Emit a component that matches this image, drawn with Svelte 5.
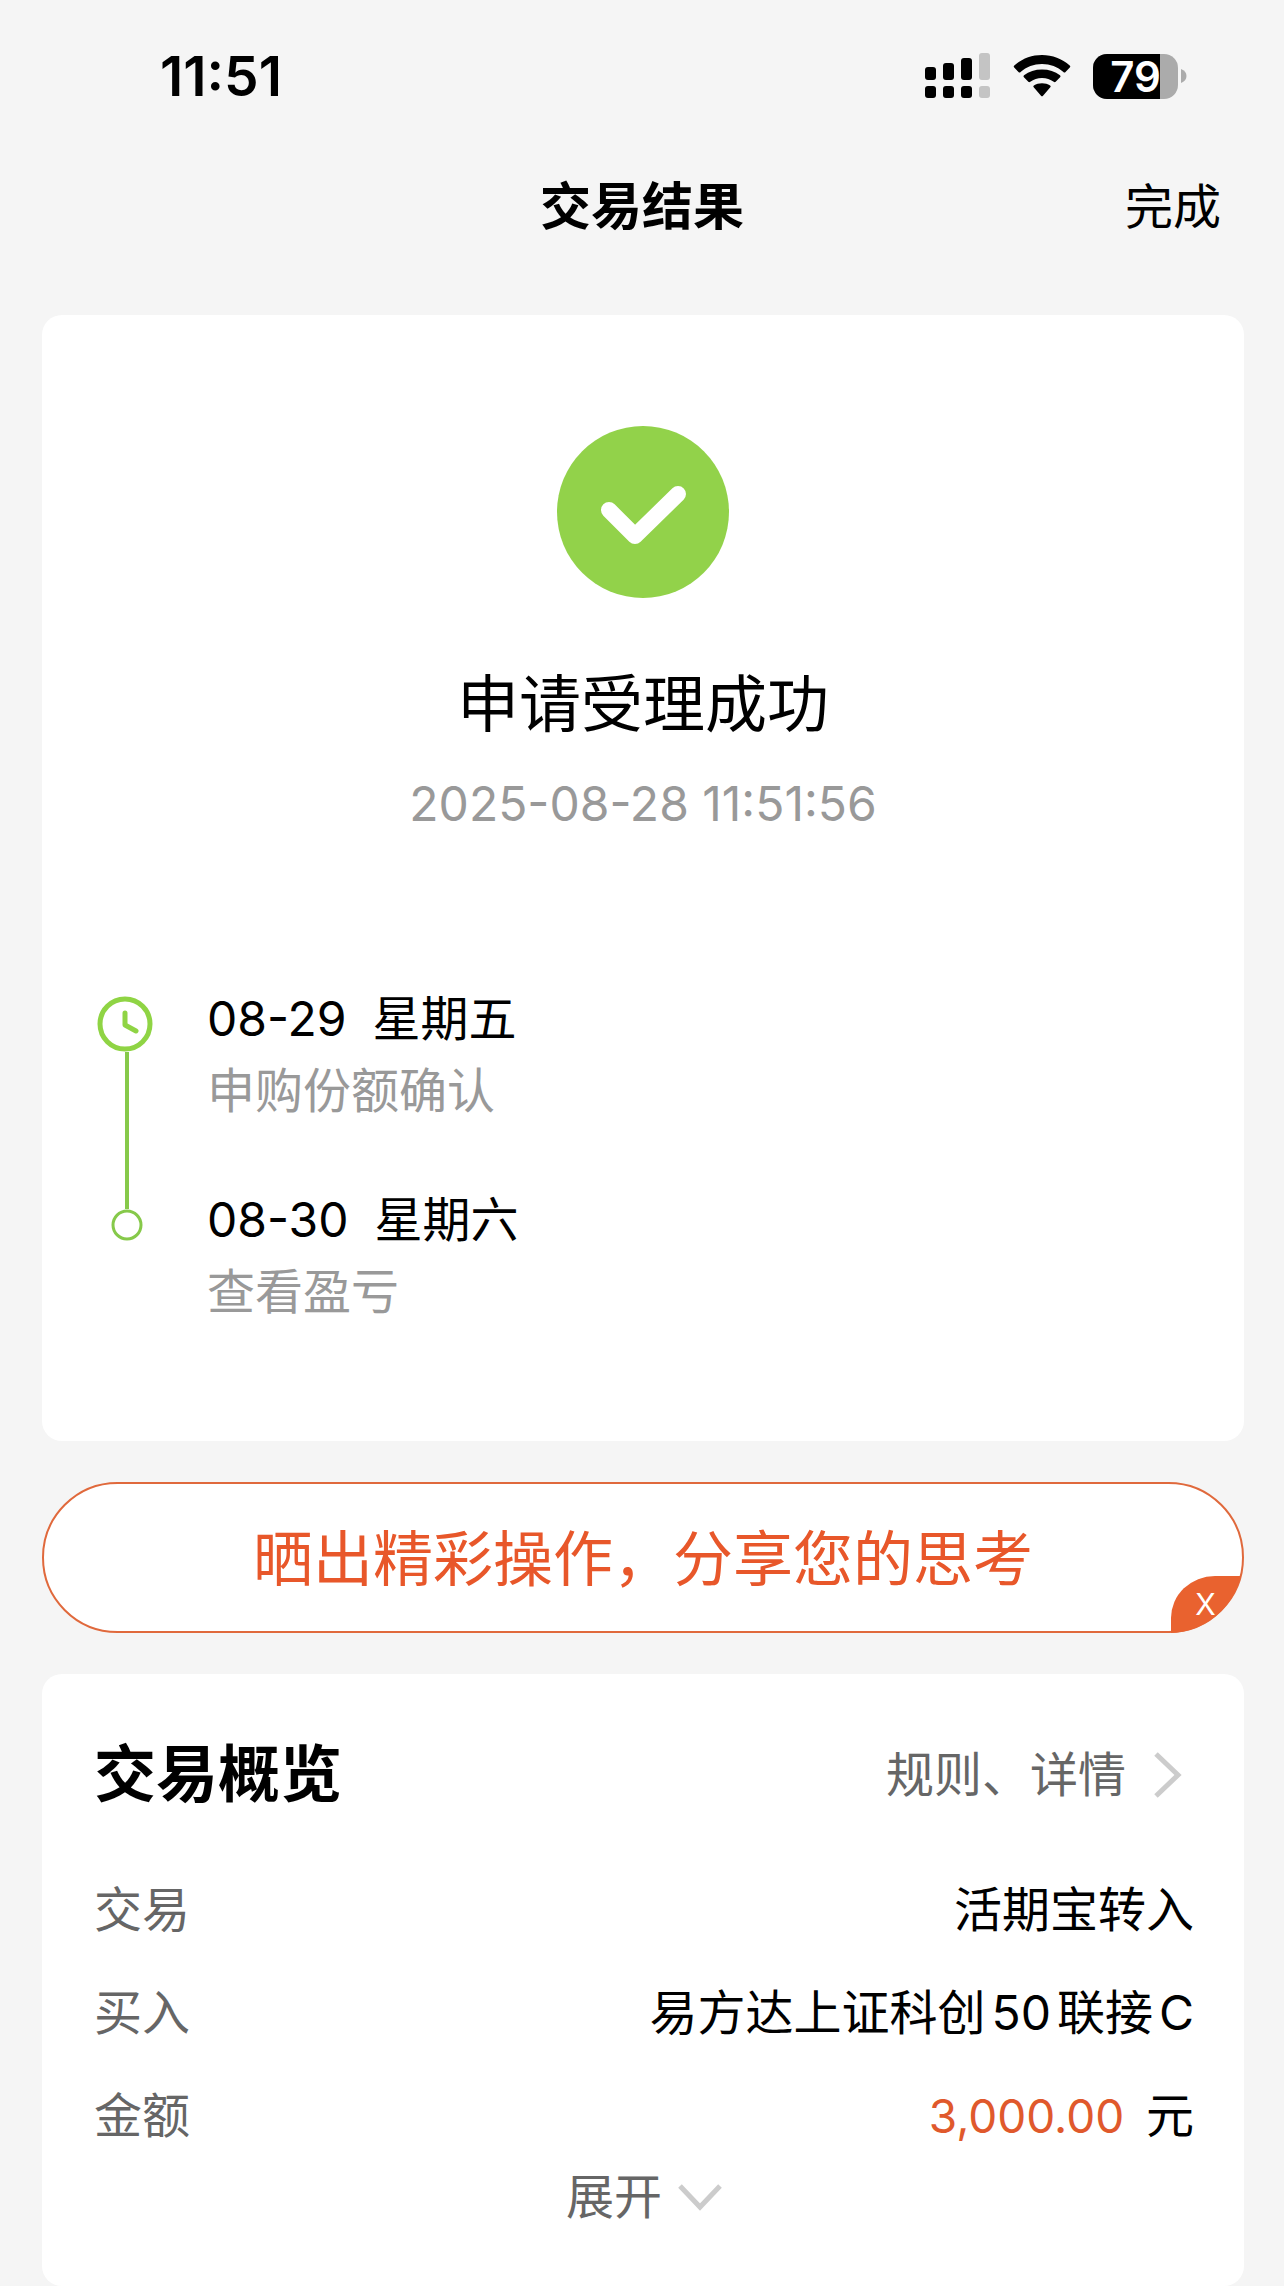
<script>
  // milestones of the order, in date order
  const steps = [
    { date: '08-29', weekday: '星期五', label: '申购份额确认', current: true },
    { date: '08-30', weekday: '星期六', label: '查看盈亏', current: false }
  ];

  const battery = 79;

  let showShare = $state(true);
</script>

<div class="page">
  <div class="status">
    <span class="status__time">11:51</span>
    <div class="status__icons">
      <svg width="66" height="46" viewBox="0 0 66 46" aria-hidden="true">
        <rect x="0" y="14" width="11" height="13" rx="3" />
        <rect x="18" y="10" width="11" height="17" rx="3" />
        <rect x="36" y="5" width="11" height="22" rx="3" />
        <rect x="54" y="0" width="11" height="27" rx="3" fill="#c4c4c4" />
        <rect x="0" y="33" width="11" height="12" rx="3" />
        <rect x="18" y="33" width="11" height="12" rx="3" />
        <rect x="36" y="33" width="11" height="12" rx="3" />
        <rect x="54" y="33" width="11" height="12" rx="3" fill="#c4c4c4" />
      </svg>
      <svg width="58" height="44" viewBox="0 0 58 44" aria-hidden="true">
        <path d="M1.2 13.6Q.2 12.5 1.3 11.5C9 4.600 18.500 1 29 1S49 4.600 56.700 11.500Q57.800 12.500 56.800 13.600L52.500 17.900Q51.500 18.900 50.400 17.900C44.500 12.700 37.200 9.900 29 9.900S13.500 12.700 7.600 17.900Q6.500 18.900 5.500 17.900Z" />
        <path d="M10.900 23.300Q9.900 22.300 11 21.300C16 17.300 22 15.400 29 15.400S42 17.300 47 21.300Q48.100 22.300 47.100 23.300L42.900 27.600Q41.900 28.600 40.700 27.700C37.400 25.200 33.500 23.900 29 23.900S20.600 25.200 17.300 27.700Q16.100 28.600 15.100 27.600Z" />
        <path d="M20.700 33.200Q19.700 32.200 20.900 31.400C23.200 29.900 25.900 29.200 29 29.200S34.800 29.900 37.100 31.400Q38.300 32.200 37.300 33.200L30 41.700Q29 42.700 28 41.700Z" />
      </svg>
      <div class="battery">
        <div class="battery__body">
          <div class="battery__level" style="width: {battery}%"></div>
          <span class="battery__text">{battery}</span>
        </div>
        <svg width="6" height="14" viewBox="0 0 6 14" aria-hidden="true">
          <path d="M0 0C3.500 1.200 5.500 3.800 5.500 7S3.500 12.800 0 14Z" fill="#ababab" />
        </svg>
      </div>
    </div>
  </div>

  <header class="nav">
    <h1 class="nav__title">交易结果</h1>
    <button class="nav__done" type="button">完成</button>
  </header>

  <main class="content">
    <section class="card result">
      <svg width="172" height="172" viewBox="0 0 172 172" aria-hidden="true">
        <circle cx="86" cy="86" r="86" fill="#92d24a" />
        <path d="M52 84L78 110L121 68" fill="none" stroke="#fff" stroke-width="16" stroke-linecap="round" stroke-linejoin="round" />
      </svg>
      <h2 class="result__title">申请受理成功</h2>
      <time class="result__time">2025-08-28 11:51:56</time>

      <ol class="steps">
        {#each steps as step, i}
          <li class="step">
            <div class="step__rail" class:step__rail--current={step.current}>
              {#if i > 0}
                <span class="step__line step__line--top"></span>
              {/if}
              {#if step.current}
                <svg class="step__clock" width="56" height="56" viewBox="0 0 56 56" fill="none" stroke="#8fd444" aria-hidden="true">
                  <circle cx="28" cy="28" r="25" stroke-width="5" />
                  <path d="M28 17V29L39 35" stroke-width="5" stroke-linecap="round" stroke-linejoin="round" />
                </svg>
              {:else}
                <svg width="32" height="32" viewBox="0 0 32 32" fill="none" stroke="#86c94a" aria-hidden="true">
                  <circle cx="16" cy="16" r="14" stroke-width="3" />
                </svg>
              {/if}
              {#if i < steps.length - 1}
                <span class="step__line"></span>
              {/if}
            </div>
            <div class="step__body">
              <p class="step__date"><span>{step.date}</span><span>{step.weekday}</span></p>
              <p class="step__label">{step.label}</p>
            </div>
          </li>
        {/each}
      </ol>
    </section>

    {#if showShare}
      <div class="share">
        <button class="share__link" type="button">晒出精彩操作，分享您的思考</button>
        <button class="share__close" type="button" aria-label="关闭" onclick={() => (showShare = false)}>X</button>
      </div>
    {/if}

    <section class="card overview">
      <div class="overview__heading">
        <h2 class="overview__title">交易概览</h2>
        <a class="overview__link" href="#detail">
          规则、详情
          <svg width="28" height="46" viewBox="0 0 28 46" aria-hidden="true">
            <path d="M2 2L24 23L2 44" fill="none" stroke="#ccc" stroke-width="5" />
          </svg>
        </a>
      </div>

      <dl class="rows">
        <div class="row">
          <dt>交易</dt>
          <dd>活期宝转入</dd>
        </div>
        <div class="row">
          <dt>买入</dt>
          <dd>易方达上证科创50联接C</dd>
        </div>
        <div class="row">
          <dt>金额</dt>
          <dd><span class="amount">3,000.00</span>元</dd>
        </div>
      </dl>

      <button class="expand" type="button">
        展开
        <svg width="44" height="28" viewBox="0 0 44 28" aria-hidden="true">
          <path d="M2 3L22 24L42 3" fill="none" stroke="#ccc" stroke-width="5" />
        </svg>
      </button>
    </section>
  </main>
</div>

<style>
  :global(body) {
    background: #f5f5f5;
    margin: 0;
  }

  .page {
    color: #000;
    font-family: Inter, "Noto Sans CJK SC", sans-serif;
    font-size: 48px;
    line-height: 60px;
    text-autospace: normal;
  }

  h1, h2, p, ol, dl, dd {
    margin: 0;
    padding: 0;
  }

  button {
    background: none;
    border: 0;
    color: inherit;
    cursor: pointer;
    font: inherit;
    padding: 0;
  }

  .status {
    align-items: center;
    display: flex;
    height: 152px;
    justify-content: space-between;
    padding: 0 97px 0 160px;
  }

  .status__time {
    font-size: 55px;
    font-weight: 600;
  }

  .status__icons {
    align-items: center;
    display: flex;
    gap: 22px;
  }

  .battery {
    align-items: center;
    display: flex;
    gap: 3px;
  }

  .battery__body {
    background: #ababab;
    border-radius: 14px;
    height: 45px;
    position: relative;
    width: 85px;
  }

  .battery__level {
    background: #000;
    border-radius: 14px 0 0 14px;
    height: 100%;
  }

  .battery__text {
    color: #fff;
    font-size: 42px;
    font-weight: 600;
    inset: 0;
    line-height: 45px;
    position: absolute;
    text-align: center;
  }

  .nav {
    align-items: center;
    display: grid;
    grid-template-columns: 1fr auto 1fr;
    height: 110px;
    padding: 0 63px;
  }

  .nav__title {
    font-size: 51px;
    font-weight: 700;
    grid-column: 2;
  }

  .nav__done {
    justify-self: end;
  }

  .content {
    display: flex;
    flex-direction: column;
    gap: 41px;
    padding: 53px 40px 0 42px;
  }

  .card {
    background: #fff;
    border-radius: 20px;
  }

  .result {
    align-items: center;
    display: flex;
    flex-direction: column;
    padding: 111px 52px 118px;
  }

  .result__title {
    font-size: 62px;
    font-weight: 400;
    line-height: 72px;
    margin-top: 71px;
  }

  .result__time {
    color: #999;
    margin-top: 33px;
  }

  .steps {
    align-self: stretch;
    list-style: none;
    margin-top: 155px;
    padding-left: 3px;
  }

  .step {
    display: flex;
    gap: 50px;
  }

  .step__rail {
    align-items: center;
    display: flex;
    flex-direction: column;
    width: 60px;
  }

  .step__rail--current {
    padding-top: 7px;
  }

  .step__clock {
    align-self: flex-start;
  }

  .step__line {
    background: #86c94a;
    flex: 1;
    width: 4px;
  }

  .step__line--top {
    flex: none;
    height: 19px;
  }

  .step__body {
    display: flex;
    flex-direction: column;
    gap: 12px;
    padding-bottom: 69px;
  }

  .step:last-child .step__body {
    padding-bottom: 1px;
  }

  .step__date {
    display: flex;
    gap: 26px;
  }

  .step__label {
    color: #999;
  }

  .share {
    background: #fff;
    border: 2px solid #e0693c;
    border-radius: 76px;
    display: flex;
    position: relative;
  }

  .share__link {
    color: #e8572a;
    flex: 1;
    font-size: 60px;
    line-height: 72px;
    padding: 39px 0 36px;
  }

  /* sits in the corner, following the outline of the pill */
  .share__close {
    background: #e9622f;
    bottom: -2px;
    clip-path: path('M0 57V42A44 42 0 0 1 44 0H70A75 75 0 0 1 0 57Z');
    color: #fff;
    font-size: 30px;
    height: 57px;
    line-height: 57px;
    padding-right: 4px;
    position: absolute;
    right: -2px;
    width: 73px;
  }

  .overview {
    padding: 65px 50px 59px 52px;
  }

  .overview__heading {
    align-items: center;
    display: flex;
    justify-content: space-between;
    line-height: 72px;
  }

  .overview__title {
    font-size: 62px;
    font-weight: 700;
  }

  .overview__link {
    align-items: center;
    color: #666;
    display: flex;
    gap: 28px;
    padding-right: 12px;
    text-decoration: none;
  }

  .rows {
    margin-top: 47px;
  }

  .row {
    align-items: center;
    display: flex;
    height: 103px;
    justify-content: space-between;
  }

  .row dt {
    color: #666;
  }

  .amount {
    color: #e0592c;
    font-size: 46px;
    margin-right: 16px;
  }

  .expand {
    align-items: center;
    color: #666;
    display: flex;
    gap: 16px;
    margin: 0 auto;
  }
</style>
